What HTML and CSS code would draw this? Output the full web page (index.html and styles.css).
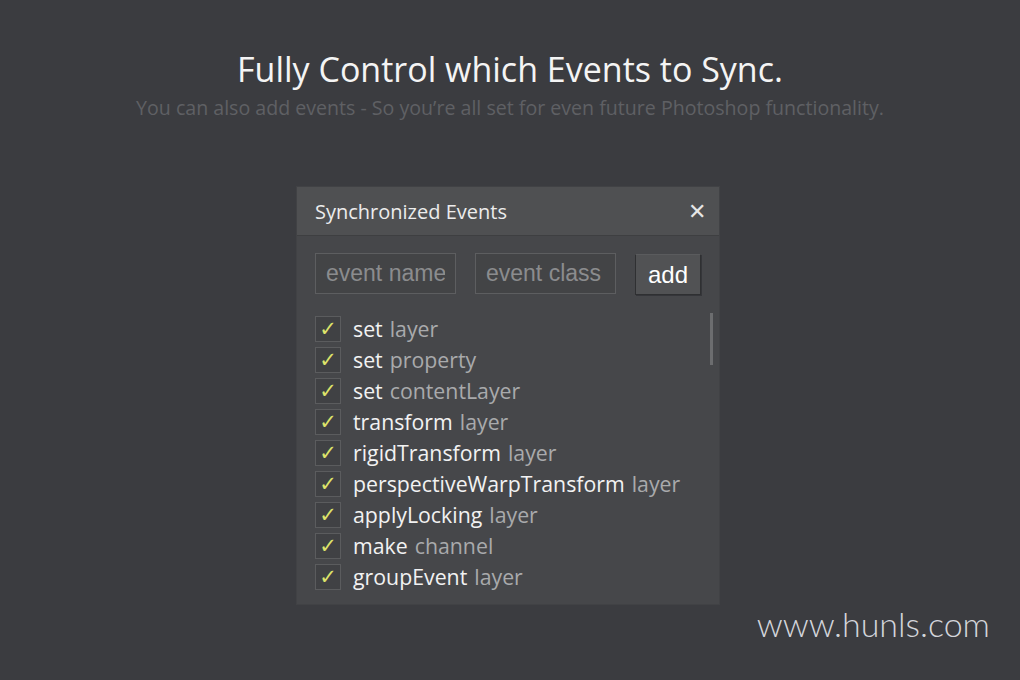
FILE: index.html
```html
<!DOCTYPE html>
<html lang="en">
<head>
    <meta charset="UTF-8">
    <meta name="viewport" content="width=device-width, initial-scale=1.0">
    <title>Synchronized Events</title>
    <link rel="stylesheet" href="styles.css">
</head>
<body>
    <div class="intro">
        <h1>Fully Control which Events to Sync.</h1>
        <p>You can also add events - So you’re all set for even future Photoshop functionality.</p>
    </div>

    <div class="panel">
        <div class="panel-header">
            <span>Synchronized Events</span>
            <span class="close">&#x2715;</span>
        </div>
        <div class="panel-body">
            <form class="add-row">
                <input type="text" placeholder="event name">
                <input type="text" placeholder="event class">
                <button type="button">add</button>
            </form>

            <ul class="events">
                <li><span class="check">&#x2713;</span><b>set</b> <i>layer</i></li>
                <li><span class="check">&#x2713;</span><b>set</b> <i>property</i></li>
                <li><span class="check">&#x2713;</span><b>set</b> <i>contentLayer</i></li>
                <li><span class="check">&#x2713;</span><b>transform</b> <i>layer</i></li>
                <li><span class="check">&#x2713;</span><b>rigidTransform</b> <i>layer</i></li>
                <li><span class="check">&#x2713;</span><b>perspectiveWarpTransform</b> <i>layer</i></li>
                <li><span class="check">&#x2713;</span><b>applyLocking</b> <i>layer</i></li>
                <li><span class="check">&#x2713;</span><b>make</b> <i>channel</i></li>
                <li><span class="check">&#x2713;</span><b>groupEvent</b> <i>layer</i></li>
            </ul>
            <div class="scrollbar"></div>
        </div>
    </div>

    <div class="watermark">www.hunls.com</div>
</body>
</html>
```

FILE: styles.css
```css
body {
    margin: 0;
    padding: 0;
    height: 680px;
    overflow: hidden;
    background-color: #3b3c40;
    font-family: 'Open Sans', 'Noto Sans', sans-serif;
    position: relative;
}

.intro {
    text-align: center;
    padding-top: 47px;
}

.intro h1 {
    margin: 0;
    font-size: 34px;
    font-weight: 400;
    line-height: 44px;
    color: #f4f4f4;
}

.intro p {
    margin: 0;
    font-size: 19.6px;
    line-height: 34px;
    color: #5f6064;
}

.panel {
    width: 422px;
    margin: 62px 0 0 297px;
    background-color: #46474a;
    box-shadow: 0 0 0 1px #414245;
}

.panel-header {
    height: 48px;
    display: flex;
    align-items: center;
    justify-content: space-between;
    padding: 0 13px 0 18px;
    background-color: #4f5052;
    border-bottom: 1px solid #3e3f41;
    color: #ececec;
    font-size: 20px;
}

.close {
    font-family: 'DejaVu Sans', sans-serif;
    font-size: 22px;
    font-weight: 300;
    color: #e6e6e6;
}

.panel-body {
    position: relative;
    padding: 17px 18px 12px 18px;
}

.add-row {
    display: flex;
    gap: 19px;
    margin: 0 0 18px 0;
}

.add-row input {
    width: 141px;
    height: 41px;
    box-sizing: border-box;
    padding: 0 10px;
    background-color: #434446;
    border: 1px solid #5d5e60;
    font-family: 'Liberation Sans', Arial, sans-serif;
    font-size: 23px;
    color: #cccccc;
    outline: none;
}

.add-row input::placeholder {
    color: #8b8c8e;
}

.add-row button {
    width: 68px;
    height: 41px;
    margin-top: 1px;
    background-color: #515254;
    border: 1px solid #2f3032;
    border-top-color: #5a5b5d;
    box-shadow: 1px 1px 0 #35363a;
    font-family: 'Liberation Sans', Arial, sans-serif;
    font-size: 24px;
    color: #ffffff;
    padding: 0;
}

.events {
    list-style: none;
    margin: 0;
    padding: 0;
}

.events li {
    display: flex;
    align-items: center;
    height: 31px;
    font-size: 21.3px;
}

.check {
    width: 26px;
    height: 26px;
    box-sizing: border-box;
    border: 1px solid #5b5c5e;
    background-color: #404144;
    color: #dde36a;
    font-family: 'DejaVu Sans', sans-serif;
    font-size: 21px;
    font-weight: bold;
    display: flex;
    align-items: center;
    justify-content: center;
    margin-right: 12px;
}

.events b {
    font-weight: 400;
    color: #f2f2f2;
    margin-right: 7px;
}

.events i {
    font-style: normal;
    color: #a9aaac;
}

.scrollbar {
    position: absolute;
    left: 413px;
    top: 77px;
    width: 3px;
    height: 52px;
    background-color: #6c6d6f;
}

.watermark {
    position: absolute;
    right: 30px;
    top: 603px;
    font-family: 'Lato', sans-serif;
    font-weight: 300;
    font-size: 34px;
    color: #d3d5db;
}
```
